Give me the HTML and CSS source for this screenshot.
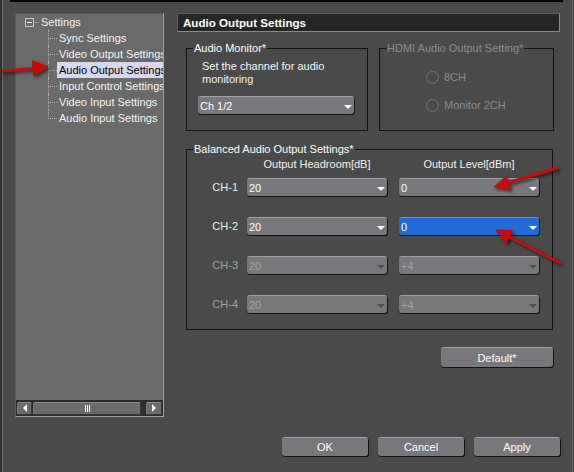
FILE: index.html
```html
<!DOCTYPE html>
<html>
<head>
<meta charset="utf-8">
<link rel="stylesheet" href="styles.css">
</head>
<body>
<div class="window">
  <div class="topbar"></div>
  <div class="body">
    <aside class="tree-panel">
      <div class="tree">
        <div class="root"><span class="toggle"></span><span class="dash"></span><span class="root-label">Settings</span></div>
        <ul class="children">
          <li><span class="label">Sync Settings</span></li>
          <li><span class="label">Video Output Settings</span></li>
          <li class="selected"><span class="label">Audio Output Settings</span></li>
          <li><span class="label">Input Control Settings</span></li>
          <li><span class="label">Video Input Settings</span></li>
          <li><span class="label">Audio Input Settings</span></li>
        </ul>
      </div>
      <div class="hscroll">
        <span class="sb-btn"><i class="tri-left"></i></span>
        <span class="sb-thumb"><i class="grip"></i></span>
        <span class="sb-btn sb-right"><i class="tri-right"></i></span>
      </div>
    </aside>
    <main class="main">
      <div class="title-bar">Audio Output Settings</div>
      <div class="group-row">
        <fieldset class="group monitor">
          <legend>Audio Monitor*</legend>
          <div class="monitor-body">
            <p class="hint">Set the channel for audio<br>monitoring</p>
            <div class="dd monitor-dd"><span>Ch 1/2</span><i class="caret"></i></div>
          </div>
        </fieldset>
        <fieldset class="group hdmi">
          <legend>HDMI Audio Output Setting*</legend>
          <div class="hdmi-body">
            <div class="radio-row"><span class="radio"></span><span>8CH</span></div>
            <div class="radio-row"><span class="radio"></span><span>Monitor 2CH</span></div>
          </div>
        </fieldset>
      </div>
      <fieldset class="group balanced">
        <legend>Balanced Audio Output Settings*</legend>
        <div class="balanced-body">
          <div class="ch-row col-heads">
            <span class="ch-label"></span><span class="cell col-head">Output Headroom[dB]</span><span class="cell cell-2 col-head">Output Level[dBm]</span>
          </div>
          <div class="ch-rows">
            <div class="ch-row">
              <span class="ch-label">CH-1</span>
              <div class="cell dd"><span>20</span><i class="caret"></i></div>
              <div class="cell cell-2 dd"><span>0</span><i class="caret"></i></div>
            </div>
            <div class="ch-row">
              <span class="ch-label">CH-2</span>
              <div class="cell dd"><span>20</span><i class="caret"></i></div>
              <div class="cell cell-2 dd dd-active"><span>0</span><i class="caret"></i></div>
            </div>
            <div class="ch-row disabled">
              <span class="ch-label">CH-3</span>
              <div class="cell dd"><span>20</span><i class="caret"></i></div>
              <div class="cell cell-2 dd"><span>+4</span><i class="caret"></i></div>
            </div>
            <div class="ch-row disabled">
              <span class="ch-label">CH-4</span>
              <div class="cell dd"><span>20</span><i class="caret"></i></div>
              <div class="cell cell-2 dd"><span>+4</span><i class="caret"></i></div>
            </div>
          </div>
        </div>
      </fieldset>
      <div class="default-row"><button class="btn btn-default">Default*</button></div>
      <div class="actions">
        <button class="btn btn-action">OK</button>
        <button class="btn btn-action">Cancel</button>
        <button class="btn btn-action">Apply</button>
      </div>
    </main>
  </div>
  <svg class="arrows" width="574" height="472" viewBox="0 0 574 472">
    <g class="arrow">
      <line x1="2" y1="71" x2="35" y2="68.2"/>
      <polygon points="48,67 32.5,60.5 33.7,75.5"/>
    </g>
    <g class="arrow">
      <line x1="557" y1="168" x2="507.5" y2="183"/>
      <polygon points="494,187 506.4,176 510.4,189.6"/>
    </g>
    <g class="arrow">
      <line x1="560" y1="263" x2="508.5" y2="236.5"/>
      <polygon points="496,230 512.5,230.5 506,243.3"/>
    </g>
  </svg>
</div>
</body>
</html>
```
FILE: styles.css
```css
html, body {
  margin: 0;
  padding: 0;
  background: #4a4a4a;
}
body {
  font-family: "Liberation Sans", Arial, sans-serif;
  font-size: 11px;
  color: #ffffff;
}
.window {
  position: relative;
  width: 574px;
  height: 472px;
  box-sizing: border-box;
  background: #4a4a4a;
  border-left: 2px solid #303030;
  border-right: 1px solid #474747;
  box-shadow: inset 1px 0 0 #6c6c6c, inset -1px 0 0 #636363;
  display: flex;
  flex-direction: column;
  overflow: hidden;
}
.topbar {
  height: 2px;
  margin: 0 10px 0 8px;
  background: #050505;
  flex: none;
}
.body {
  flex: 1;
  display: flex;
  align-items: stretch;
  margin-top: 11px;
  min-height: 0;
}

/* ---------- tree panel ---------- */
.tree-panel {
  flex: none;
  margin-left: 13px;
  width: 149px;
  height: 404px;
  box-sizing: border-box;
  background: #6a6a6a;
  border-top: 1px solid #555555;
  border-left: 1px solid #5c5c5c;
  border-right: 1px solid #a4a4a4;
  border-bottom: 1px solid #a4a4a4;
  display: flex;
  flex-direction: column;
  overflow: hidden;
}
.tree {
  flex: 1;
  color: #f4f4f4;
  white-space: nowrap;
}
.root {
  display: flex;
  align-items: center;
  height: 16px;
}
.toggle {
  flex: none;
  width: 9px;
  height: 9px;
  box-sizing: border-box;
  margin-left: 9px;
  border: 1px solid #c4c4c4;
  background: linear-gradient(#e8e8e8, #e8e8e8) center / 5px 1px no-repeat;
}
.dash {
  flex: none;
  width: 4px;
  margin-left: 1px;
  border-top: 1px dotted #b0b0b0;
}
.root-label {
  margin-left: 2px;
  line-height: 16px;
}
.children {
  list-style: none;
  margin: 0 0 0 32px;
  padding: 0;
}
.children li {
  display: flex;
  align-items: flex-start;
  height: 16px;
  border-left: 1px dotted transparent;
}
.children li:not(:last-child) {
  border-left-color: #b0b0b0;
}
.children li::before {
  content: "";
  flex: none;
  width: 8px;
  height: 8px;
  border-bottom: 1px dotted #b0b0b0;
}
.children li:last-child::before {
  margin-left: -1px;
  border-left: 1px dotted #b0b0b0;
}
.children .label {
  flex: 1;
  padding-left: 2px;
  height: 16px;
  line-height: 16px;
}
.children li.selected .label {
  background: #d7d7f1;
  color: #000000;
}

/* horizontal scrollbar */
.hscroll {
  flex: none;
  height: 16px;
  background: #2c2c2c;
  display: flex;
  align-items: center;
  padding: 0 1px;
}
.sb-btn, .sb-thumb {
  box-sizing: border-box;
  height: 13px;
  background: #6b6b6b;
  border-top: 1px solid #8c8c8c;
  border-left: 1px solid #7a7a7a;
  border-bottom: 1px solid #3a3a3a;
  border-right: 1px solid #3a3a3a;
  border-radius: 2px;
  display: flex;
  align-items: center;
  justify-content: center;
}
.sb-btn {
  width: 15px;
  flex: none;
}
.sb-right {
  margin-left: auto;
  width: 16px;
}
.sb-thumb {
  width: 108px;
  margin-left: 1px;
  flex: none;
}
.tri-left {
  width: 0;
  height: 0;
  border-top: 4px solid transparent;
  border-bottom: 4px solid transparent;
  border-right: 4px solid #ffffff;
}
.tri-right {
  width: 0;
  height: 0;
  border-top: 4px solid transparent;
  border-bottom: 4px solid transparent;
  border-left: 4px solid #ffffff;
}
.grip {
  width: 5px;
  height: 7px;
  background: linear-gradient(to right, #ffffff 1px, transparent 1px) 0 0 / 2px 7px repeat-x;
}

/* ---------- main ---------- */
.main {
  flex: none;
  width: 383px;
  margin-left: 13px;
  display: flex;
  flex-direction: column;
  padding-bottom: 16px;
  box-sizing: border-box;
}
.title-bar {
  flex: none;
  height: 19px;
  box-sizing: border-box;
  background: #262626;
  border: 1px solid #8a8a8a;
  border-top-color: #5a5a5a;
  border-left-color: #5e5e5e;
  padding-left: 5px;
  font-weight: bold;
  font-size: 11.6px;
  line-height: 17px;
  color: #ffffff;
}
.group-row {
  display: flex;
  gap: 11px;
  margin: 9px 0 0 9px;
}
.group {
  margin: 0;
  padding: 0;
  min-width: 0;
  border: 1px solid #121212;
  box-sizing: border-box;
}
.group legend {
  padding: 0 1px;
  margin-left: 6px;
  line-height: 14px;
  color: #ffffff;
}
.monitor {
  width: 182px;
}
.monitor-body {
  padding: 5px 0 16px 11px;
}
.hint {
  margin: 0 0 0 4px;
  line-height: 13px;
  color: #f4f4f4;
}
.monitor-dd {
  width: 156px;
  margin-top: 10px;
}
.hdmi {
  width: 175px;
}
.hdmi legend {
  color: #8c8c8c;
}
.hdmi-body {
  padding: 15px 0 0 46px;
  display: flex;
  flex-direction: column;
  gap: 14px;
  color: #8c8c8c;
}
.radio-row {
  display: flex;
  align-items: center;
  height: 14px;
  gap: 5px;
}
.radio {
  flex: none;
  width: 13px;
  height: 13px;
  box-sizing: border-box;
  border-radius: 50%;
  border: 1px solid #747474;
}

.balanced {
  width: 367px;
  margin: 11px 0 0 9px;
}
.balanced-body {
  padding: 1px 0 16px 0;
}
.ch-row {
  display: flex;
  align-items: center;
}
.ch-label {
  flex: none;
  width: 51px;
  text-align: right;
  color: #f0f0f0;
}
.cell {
  flex: none;
  width: 140px;
  margin-left: 9px;
}
.cell-2 {
  margin-left: 12px;
}
.col-heads {
  line-height: 14px;
  margin-bottom: 7px;
}
.col-head {
  text-align: center;
  color: #f0f0f0;
}
.ch-rows {
  display: flex;
  flex-direction: column;
  gap: 21px;
}

/* drop-down */
.dd {
  height: 18px;
  box-sizing: border-box;
  background: #78787c;
  border-top: 1px solid #a2a2a4;
  border-radius: 3px;
  box-shadow: 0 1px 0 #141414, 1px 1px 0 #141414;
  display: flex;
  align-items: center;
  padding: 0 2px 0 2px;
  color: #ffffff;
  line-height: 16px;
}
.dd span {
  flex: 1;
}
.caret {
  flex: none;
  width: 0;
  height: 0;
  margin-top: 3px;
  border-left: 4px solid transparent;
  border-right: 4px solid transparent;
  border-top: 4px solid #ffffff;
}
.dd-active {
  background: #236bd8;
  border-top-color: #5f97ea;
}
.disabled .ch-label,
.disabled .dd {
  color: #a2a2a2;
}
.disabled .caret {
  border-top-color: #4e4e4e;
}

/* buttons */
.btn {
  font-family: inherit;
  font-size: 11px;
  color: #ffffff;
  background: #78787c;
  border: none;
  border-top: 1px solid #a2a2a4;
  border-radius: 3px;
  box-shadow: 0 1px 0 #141414, 1px 1px 0 #141414;
  padding: 0;
  box-sizing: border-box;
}
.default-row {
  display: flex;
  justify-content: flex-end;
  margin: 17px 7px 0 0;
}
.btn-default {
  width: 112px;
  height: 20px;
}
.actions {
  margin-top: auto;
  display: flex;
  justify-content: flex-end;
  gap: 10px;
}
.btn-action {
  width: 86px;
  height: 19px;
}

/* annotation arrows */
.arrows {
  position: absolute;
  left: -2px;
  top: 0;
  pointer-events: none;
  filter: drop-shadow(2px 2px 1.5px rgba(0, 0, 0, 0.55));
}
.arrow line {
  stroke: #c40c0c;
  stroke-width: 3;
  stroke-linecap: round;
}
.arrow polygon {
  fill: #c40c0c;
  stroke: #c40c0c;
  stroke-width: 1;
  stroke-linejoin: round;
}
```
